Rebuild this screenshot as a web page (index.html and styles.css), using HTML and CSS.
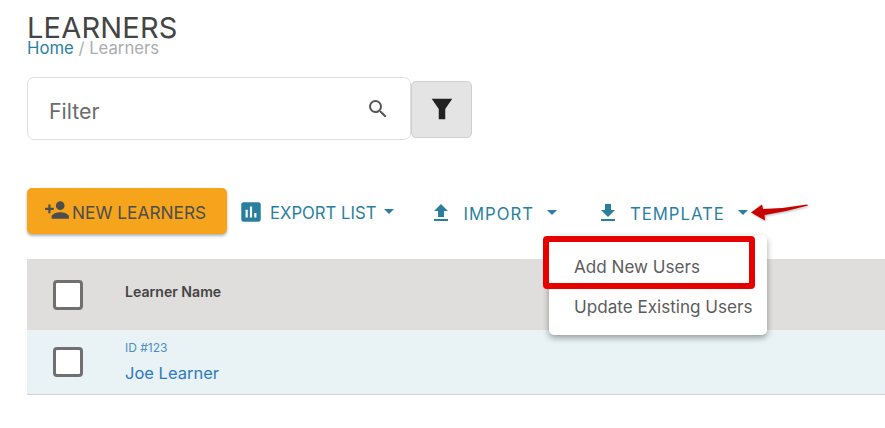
FILE: index.html
```html
<!DOCTYPE html>
<html lang="en">
<head>
<meta charset="utf-8">
<title>Learners</title>
<link rel="stylesheet" href="styles.css">
</head>
<body>
<main class="page">
  <h1 class="title">LEARNERS</h1>
  <nav class="crumbs"><a class="crumb-link">Home</a> / Learners</nav>
  <div class="filter-row">
    <div class="search">
      <span class="search-label">Filter</span>
      <svg class="search-icon" viewBox="0 0 24 24"><path d="M15.5 14h-.79l-.28-.27A6.47 6.47 0 0 0 16 9.5 6.5 6.5 0 1 0 9.5 16c1.61 0 3.09-.59 4.23-1.57l.27.28v.79l5 4.99L20.49 19l-4.99-5zm-6 0C7.01 14 5 11.99 5 9.5S7.01 5 9.5 5 14 7.01 14 9.5 11.99 14 9.5 14z"/></svg>
    </div>
    <button class="filter-btn"><svg viewBox="0 0 24 24"><path d="M2.500 2.500h19L15 12v9.500L9 21.500V12z"/></svg></button>
  </div>
  <div class="toolbar">
    <button class="primary">
      <svg class="add-icon" viewBox="0 0 24 24"><path d="M15 12c2.210 0 4-1.790 4-4s-1.790-4-4-4-4 1.790-4 4 1.790 4 4 4zm-9-2V7H4v3H1v2h3v3h2v-3h3v-2H6zm9 4c-2.670 0-8 1.340-8 4v2h16v-2c0-2.660-5.330-4-8-4z"/></svg>
      <span>NEW LEARNERS</span>
    </button>
    <button class="action export">
      <svg class="icon-20" viewBox="0 0 24 24"><path d="M19 3H5c-1.100 0-2 .9-2 2v14c0 1.100.9 2 2 2h14c1.100 0 2-.9 2-2V5c0-1.100-.9-2-2-2zM9 17H7v-7h2v7zm4 0h-2V7h2v10zm4 0h-2v-4h2v4z"/></svg>
      <span class="label">EXPORT LIST</span><span class="caret"></span>
    </button>
    <button class="action import">
      <svg class="icon-24" viewBox="0 0 24 24"><path d="M9 16h6v-6h4l-7-7-7 7h4v6zm-4 2h14v2H5v-2z"/></svg>
      <span class="label wide">IMPORT</span><span class="caret"></span>
    </button>
    <button class="action template">
      <svg class="icon-24" viewBox="0 0 24 24"><path d="M19 9h-4V3H9v6H5l7 7 7-7zM5 18v2h14v-2H5z"/></svg>
      <span class="label wide">TEMPLATE</span><span class="caret"></span>
    </button>
  </div>
  <div class="table">
    <div class="head-row">
      <span class="check"></span>
      <strong class="head-name">Learner Name</strong>
    </div>
    <div class="body-row">
      <span class="check"></span>
      <div class="learner">
        <span class="learner-id">ID #123</span>
        <a class="learner-name">Joe Learner</a>
      </div>
    </div>
  </div>
</main>
<div class="menu">
  <div class="menu-item">Add New Users</div>
  <div class="menu-item">Update Existing Users</div>
</div>
<div class="highlight"></div>
<svg class="arrow" viewBox="0 0 58 20"><path d="M0 10.500 L11 2.500 L12 7 Q34 6.500 56 2.500 L57 3.500 Q36 9.500 13.500 13 L14 18.500 Z"/></svg>
</body>
</html>
```
FILE: styles.css
```css
* { box-sizing: border-box; }
html, body { margin: 0; height: 100%; overflow: hidden; background: #fff; }
body { font-family: Inter, "Open Sans", sans-serif; color: #444; position: relative; }
.page { padding: 14px 0 0 27px; }
.title { margin: 0; font-size: 29px; line-height: 27px; font-weight: 400; color: #444; letter-spacing: 0.2px; }
.crumbs { font-size: 16.700px; line-height: 14px; color: #a9adb0; }
.crumb-link { color: #2a7f9f; }
.filter-row { display: flex; align-items: center; margin-top: 22px; }
.search { width: 384px; height: 63px; border: 1px solid #dfdfdf; border-radius: 7px; display: flex; align-items: center; justify-content: space-between; padding: 0 20px 0 21px; background: #fff; }
.search-label { font-size: 21.300px; color: #6b6b6b; margin-top: 5px; }
.search-icon { width: 24px; height: 24px; fill: #555; margin-top: 1px; }
.filter-btn { width: 61px; height: 57px; padding: 0; margin-top: 1px; background: #e4e4e4; border: 1px solid #cfcfcf; border-radius: 5px; display: flex; align-items: center; justify-content: center; }
.filter-btn svg { width: 26px; height: 26px; fill: #222; }
.toolbar { display: flex; align-items: center; margin-top: 48px; height: 46px; }
button { font-family: inherit; cursor: pointer; }
.primary { width: 200px; height: 46px; background: #f7a41d; border: 0; border-radius: 5px; box-shadow: 0 2px 3px rgba(0,0,0,.3); display: flex; align-items: center; padding: 0 0 0 17px; color: #4d4d4d; font-size: 17.300px; }
.primary span { margin-top: 3px; }
.add-icon { width: 26px; height: 26px; fill: #4d4d4d; margin-top: -2px; margin-right: 2px; }
.action { display: flex; align-items: center; background: none; border: 0; padding: 0; color: #2a7f9f; font-size: 16.700px; height: 46px; }
.action .label { margin-top: 3px; }
.action svg { fill: #2a7f9f; }
.export { margin-left: 12px; }
.import { margin-left: 35px; }
.template { margin-left: 39px; }
.icon-20 { width: 26px; height: 26px; margin: 2px 6px 0 -1px; }
.icon-24 { width: 24px; height: 24px; margin-right: 10px; margin-top: 4px; }
.label { letter-spacing: 0; }
.action .label.wide { letter-spacing: 1px; margin-top: 5px; }
.caret { width: 0; height: 0; border-left: 5px solid transparent; border-right: 5px solid transparent; border-top: 5px solid #2a7f9f; margin-left: 8px; margin-top: 0; }
.wide + .caret { margin-left: 13px; margin-top: 3px; }
.table { margin-top: 25px; }
.head-row { height: 71px; background: #dfdedc; display: flex; align-items: center; padding-left: 26px; }
.body-row { height: 65px; background: #e9f2f5; border-bottom: 1px solid #cdd3d6; display: flex; align-items: center; padding-left: 26px; }
.check { width: 30px; height: 30px; background: #fff; border: 3px solid #707070; border-radius: 4px; flex: none; }
.head-name { margin-left: 42px; margin-top: -6px; font-size: 14.100px; font-weight: 600; color: #444; }
.learner { margin-left: 42px; display: flex; flex-direction: column; }
.learner-id { font-size: 12px; color: #4d8fc9; line-height: 14px; }
.learner-name { font-size: 16.500px; color: #2c7ac0; line-height: 20px; margin-top: 8px; }
.menu { position: absolute; left: 549px; top: 235px; width: 218px; height: 100px; background: #fff; border-radius: 5px; box-shadow: 0 3px 6px rgba(0,0,0,.35); padding-top: 12px; }
.menu-item { font-size: 17.100px; color: #5c5c5c; padding-left: 25px; height: 40px; line-height: 40px; white-space: nowrap; }
.highlight { position: absolute; left: 543px; top: 236px; width: 212px; height: 53px; border: 6px solid #e60000; border-radius: 4px; }
.arrow { position: absolute; left: 751px; top: 202px; width: 58px; height: 20px; fill: #c80000; filter: drop-shadow(1px 1px 1px rgba(0,0,0,.3)); }
```
